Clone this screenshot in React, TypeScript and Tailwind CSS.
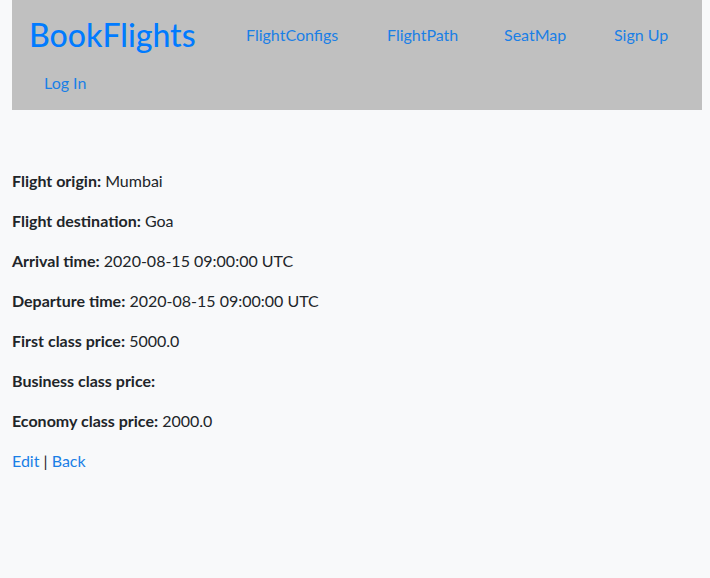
export default function App() {
  const rows: [string, string][] = [
    ["Flight origin:", "Mumbai"],
    ["Flight destination:", "Goa"],
    ["Arrival time:", "2020-08-15 09:00:00 UTC"],
    ["Departure time:", "2020-08-15 09:00:00 UTC"],
    ["First class price:", "5000.0"],
    ["Business class price:", ""],
    ["Economy class price:", "2000.0"],
  ];
  return (
    <div
      className="min-h-[578px] bg-[#f8f9fa] pl-3 pr-2 text-[16px] leading-6 text-[#212529]"
      style={{ fontFamily: 'Lato, "Open Sans", sans-serif' }}
    >
      <nav className="flex h-[110px] flex-wrap content-start items-center gap-x-4 bg-[#c0c0c0] px-4 pt-[11px] pb-[3px]">
        <a className="flex h-12 w-[186px] items-center pl-px text-[32px] font-medium text-[#007bff]">BookFlights</a>
        <a className="flex h-12 w-[125px] items-center px-4 text-[#1a7fe6]">FlightConfigs</a>
        <a className="flex h-12 w-[101px] items-center px-4 text-[#1a7fe6]">FlightPath</a>
        <a className="flex h-12 w-[94px] items-center px-4 text-[#1a7fe6]">SeatMap</a>
        <a className="flex h-12 w-[87px] items-center px-4 text-[#1a7fe6]">Sign Up</a>
        <a className="flex h-12 items-center px-4 text-[#1a7fe6]">Log In</a>
      </nav>
      <div className="pt-[59px]">
        {rows.map(([k, v]) => (
          <p key={k} className="mb-4">
            <strong className="font-bold">{k}</strong> {v}
          </p>
        ))}
        <p>
          <a className="text-[#1a7fe6]">Edit</a> <span className="text-[#212529]">|</span>{" "}
          <a className="text-[#1a7fe6]">Back</a>
        </p>
      </div>
    </div>
  );
}
